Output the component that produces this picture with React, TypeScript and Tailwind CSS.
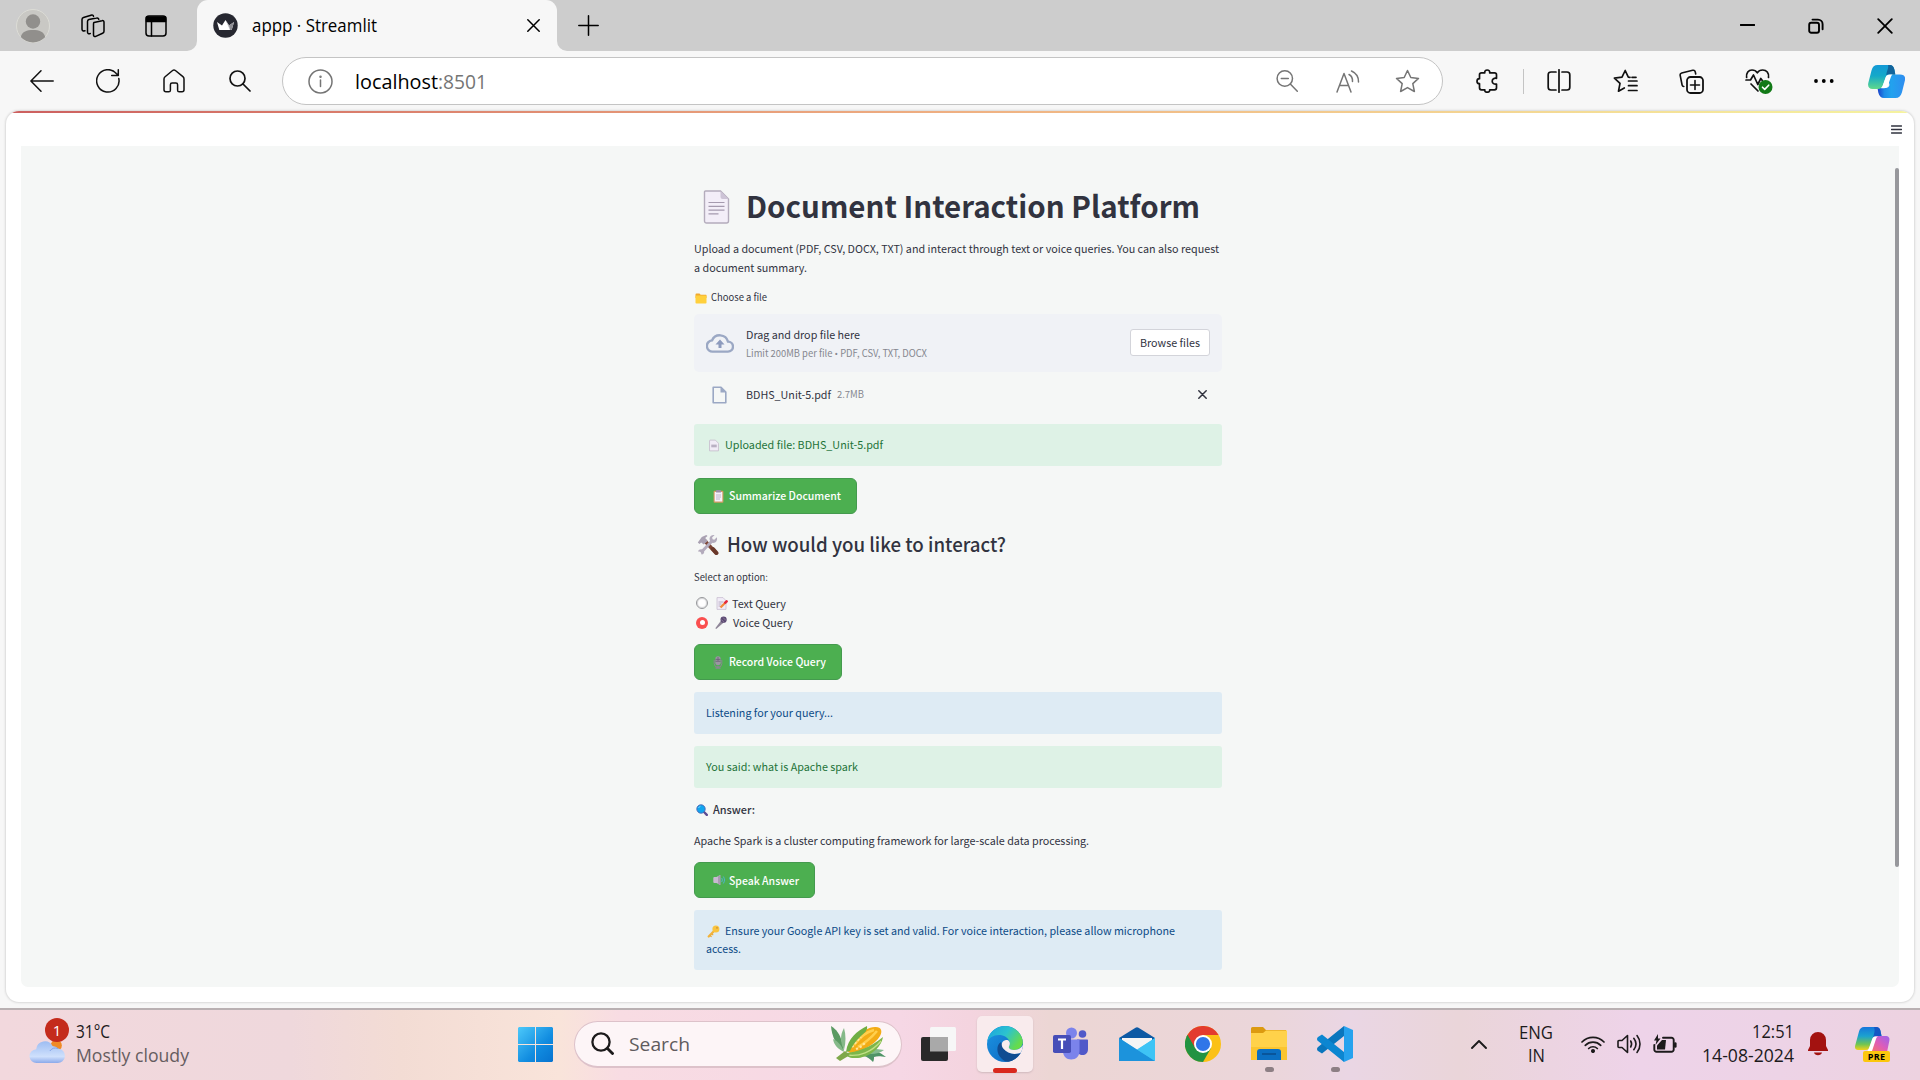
import React, { useLayoutEffect, useRef, useState } from "react";

type FitProps = { className: string; lift?: number; children: React.ReactNode };

/** Single line of text condensed or widened to fill the width of its box. */
function Fit({ className, lift = 0, children }: FitProps) {
  const box = useRef<HTMLSpanElement>(null);
  const inner = useRef<HTMLSpanElement>(null);
  const [scale, setScale] = useState(1);
  useLayoutEffect(() => {
    if (box.current && inner.current) {
      setScale(box.current.offsetWidth / inner.current.getBoundingClientRect().width);
    }
  }, []);
  return (
    <span ref={box} className={"block shrink-0 whitespace-nowrap " + className}>
      <span ref={inner} className="inline-block origin-left" style={{ transform: `translateY(${-lift}px) scaleX(${scale})` }}>
        {children}
      </span>
    </span>
  );
}

type IconProps = { box: string; className: string; children: React.ReactNode };

function Line({ box, className, children }: IconProps) {
  return (
    <svg viewBox={box} className={"shrink-0 " + className} fill="none" stroke="currentColor" strokeWidth="1.5" strokeLinecap="round" strokeLinejoin="round">
      {children}
    </svg>
  );
}

function Art({ box, className, children }: IconProps) {
  return (
    <svg viewBox={box} className={"shrink-0 " + className}>
      {children}
    </svg>
  );
}

const starPath = "M12.5 1.5l3.3 7 7.7.9-5.7 5.2 1.6 7.9-6.9-3.9-6.9 3.9 1.6-7.9L1.500 9.400l7.700-.9z";

/* ---------- emoji drawings ---------- */

function PageEmoji({ className }: { className: string }) {
  return (
    <Art box="0 0 26 34" className={className}>
      <path d="M2 1h15l8 8v22a2 2 0 0 1-2 2H3a2 2 0 0 1-2-2V2a1 1 0 0 1 1-1z" fill="#f3eef8" stroke="#b4acbc" strokeWidth="1.4" />
      <path d="M17 1l8 8h-6a2 2 0 0 1-2-2z" fill="#cdc4d6" />
      <path d="M5 12.500h16M5 16.300h16M5 20.100h16M5 23.800h10" stroke="#a59aae" strokeWidth="1.200" />
    </Art>
  );
}

function SmallPage({ className }: { className: string }) {
  return (
    <Art box="0 0 11 13" className={className}>
      <path d="M1 .6h6l3.400 3.400v8.400H.6V1z" fill="#f1ecf7" stroke="#c5bccd" strokeWidth=".9" />
      <path d="M2.500 5.500h6v3h-6z" fill="#b9b0c3" />
    </Art>
  );
}

function FolderEmoji() {
  return (
    <Art box="0 0 12 11" className="h-[11px] w-[12px]">
      <path d="M.5 1.500A1 1 0 0 1 1.500.5h3l1.200 1.300H11a.6.6 0 0 1 .5.6V5H.5z" fill="#f0a92e" />
      <rect x=".5" y="2.600" width="11" height="8" rx=".8" fill="#ffd03c" />
    </Art>
  );
}

function ClipboardEmoji() {
  return (
    <Art box="0 0 11 13" className="h-[13px] w-[11px]">
      <rect x=".6" y=".8" width="9.800" height="12" rx="1" fill="#d59a63" />
      <rect x="1.700" y="2" width="7.600" height="9.500" fill="#f5f0fa" />
      <rect x="3" y="0" width="5" height="2.600" rx=".7" fill="#9a8fa6" />
      <path d="M3 5h5M3 7h5M3 9h4" stroke="#b7adc2" strokeWidth=".9" />
    </Art>
  );
}

function ToolsEmoji() {
  return (
    <Art box="0 0 22 22" className="h-[22px] w-[22px]">
      <path d="M8 7l11 12" stroke="#7d4533" strokeWidth="3.600" strokeLinecap="round" />
      <path d="M16 15l3.500 4" stroke="#6a382a" strokeWidth="4" strokeLinecap="round" />
      <path d="M.8 8.500l4-5.500 4.500-2 1.200 1-2.300 2 2.500 3-4 3.500-2.500-2L2.500 10z" fill="#a9a1b2" />
      <path d="M4 18.500L15 7" stroke="#b3abbc" strokeWidth="3" />
      <path d="M19.800 3.200l-2.500 2.500-1.700-.4-.5-1.700 2.500-2.500c-2-.6-4.500.5-5 3-.4 2.400 1.200 4.700 3.500 4.800 2.800.1 4.700-2.700 3.700-5.700z" fill="#b3abbc" />
      <path d="M1 17.500l2.700.3.800 2.700c2 0 3-1.600 2.600-3.200C6.600 15.300 3.800 14.500 1.800 16z" fill="#b3abbc" />
    </Art>
  );
}

function MemoEmoji() {
  return (
    <Art box="0 0 12 13" className="h-[13px] w-[12px]">
      <path d="M1 .6h6l3 3v8.800H1z" fill="#f1ecf7" stroke="#c8bfd0" strokeWidth=".8" />
      <path d="M2.500 5h5M2.500 7h3M2.500 9h2" stroke="#b2a8be" strokeWidth=".9" />
      <path d="M4.500 10.500l5-5" stroke="#f38b3c" strokeWidth="2.300" />
      <path d="M9.300 5.700l1.300-1.300" stroke="#e5283c" strokeWidth="2.600" strokeLinecap="round" />
    </Art>
  );
}

function MicEmoji() {
  return (
    <Art box="0 0 12 13" className="h-[13px] w-[12px]">
      <path d="M.3 12.300L6.500 4l2.500 2.300-7.800 6.600z" fill="#8f8698" />
      <circle cx="8.600" cy="3.700" r="3.100" fill="#5c4a74" />
      <path d="M6.300 3.500l3 3M8 1.500l3 3" stroke="#95869f" strokeWidth=".8" />
    </Art>
  );
}

function StudioMicEmoji() {
  return (
    <Art box="0 0 10 13" className="h-[13px] w-[10px]">
      <path d="M1.200 4v3.500a3.800 3.800 0 0 0 7.600 0V4" fill="none" stroke="#8b8592" strokeWidth="1" />
      <rect x="2.300" y=".3" width="5.400" height="9" rx="2.700" fill="#9b94a3" />
      <path d="M2.500 3.400h5M2.500 5.300h5M5 1v4" stroke="#6a5f75" strokeWidth=".8" />
      <path d="M2.500 12h5M5 10v2" stroke="#8b8592" strokeWidth="1.500" />
    </Art>
  );
}

function LensEmoji() {
  return (
    <Art box="0 0 12 12" className="h-[12px] w-[12px]">
      <path d="M8 8l2.800 2.800" stroke="#5d4c92" strokeWidth="2.400" strokeLinecap="round" />
      <circle cx="5" cy="5" r="4.200" fill="#0fa5ef" stroke="#4865b5" strokeWidth=".9" />
      <path d="M2.500 4a3 3 0 0 1 2-1.800" stroke="#7fd5ff" strokeWidth=".9" fill="none" />
    </Art>
  );
}

function SpeakerEmoji() {
  return (
    <Art box="0 0 12 12" className="h-[12px] w-[12px]">
      <path d="M.3 4a1 1 0 0 1 1-1H3.500L7.200 1v10L3.500 9H1.300a1 1 0 0 1-1-1z" fill="#c9b9d2" />
      <path d="M5 2.200v7.600L7.400 11V1z" fill="#a99bb3" />
      <path d="M8.700 4c.8 1.300.8 2.700 0 4M10.300 2.500c1.600 2.400 1.600 4.600 0 7" fill="none" stroke="#4db5cf" strokeWidth="1" />
    </Art>
  );
}

function KeyEmoji() {
  return (
    <Art box="0 0 13 13" className="h-[13px] w-[13px]">
      <path d="M1.700 11.500L7.500 5.500" stroke="#f2b23a" strokeWidth="2.200" strokeLinecap="round" />
      <path d="M3 10.500l1.600 1.400M4.800 8.800l1.400 1.300" stroke="#e9ab3a" strokeWidth="1.200" />
      <circle cx="8.900" cy="4" r="3.500" fill="#f9c440" />
      <circle cx="10" cy="2.900" r=".8" fill="#c98a30" />
    </Art>
  );
}

/* ---------- browser ---------- */

function TabStrip() {
  return (
    <div className="flex h-[51px] items-center bg-[#cdcdcd] text-black">
      <Art box="0 0 34 34" className="ml-[16px] h-[34px] w-[34px]">
        <circle cx="17" cy="17" r="16.500" fill="#c9c8c4" stroke="#dcdcd6" />
        <ellipse cx="17" cy="12.500" rx="7.200" ry="7.200" fill="#918f8c" />
        <path d="M4.800 28c1.500-5.500 6-7 12.200-7s10.700 1.500 12.200 7a16.300 16.300 0 0 1-24.400 0z" fill="#918f8c" />
      </Art>
      <Line box="0 0 24 24" className="ml-[31px] h-[24px] w-[24px]">
        <path d="M13 8.500l8-1.800c1.200-.3 2 .3 2 1.500v9c0 1-.4 1.600-1.400 2l-6.800 3.200c-1 .5-2.300 0-2.300-1.500V10c0-.8 0-1.200.5-1.500z" />
        <path d="M9.300 19.500c-1.800.6-2.800 0-2.800-1.500V7.500c0-1 .5-1.700 1.400-2L15.500 4c1.300-.3 2 .2 2.300 1.200" />
        <path d="M4 16.800c-1.800.4-3 0-3-1.600V5.500c0-1 .5-1.700 1.500-2L10 1.200c1.300-.4 2.200 0 2.500 1" />
      </Line>
      <Line box="0 0 22 22" className="ml-[40px] h-[22px] w-[22px]">
        <rect x="1" y="1" width="20" height="20" rx="3" />
        <path d="M1.500 2h19v4.500h-19z" fill="currentColor" />
        <path d="M6.500 6v15" />
      </Line>
      <div className="relative ml-[30px] flex h-full w-[360px] items-center rounded-t-[11px] bg-[#f7f7f7] pr-[17px] pl-[16px]">
        <svg viewBox="0 0 10 10" className="absolute bottom-0 -left-[10px] h-[10px] w-[10px]"><path d="M10 0v10H0A10 10 0 0 0 10 0z" fill="#f7f7f7" /></svg>
        <svg viewBox="0 0 10 10" className="absolute -right-[10px] bottom-0 h-[10px] w-[10px]"><path d="M0 0v10h10A10 10 0 0 1 0 0z" fill="#f7f7f7" /></svg>
        <Art box="0 0 25 25" className="h-[25px] w-[25px]">
          <circle cx="12.500" cy="12.500" r="12.200" fill="#262730" />
          <path d="M4 9l5 3.500L12.500 7l3.500 5.500L21 9l-2.300 8H6.300z" fill="#fff" />
          <path d="M12.500 7l3.500 5.500 1 4.500z" fill="#b9b9bd" />
          <path d="M16 12.500L21 9l-2.300 8H17z" fill="#8d8d93" />
        </Art>
        <Fit lift={1} className="ml-[14px] w-[125px] text-[17.500px] leading-[26px]">appp · Streamlit</Fit>
        <Line box="0 0 13 13" className="ml-auto h-[13px] w-[13px]">
          <path d="M.8.8l11.400 11.400M12.200.8L.8 12.200" />
        </Line>
      </div>
      <Line box="0 0 21 21" className="ml-[21px] h-[21px] w-[21px]">
        <path d="M10.500.8v19.400M.8 10.500h19.400" />
      </Line>
      <Line box="0 0 15 15" className="ml-auto h-[15px] w-[15px]">
        <path d="M.5 7h14" strokeWidth="1.900" />
      </Line>
      <Line box="0 0 16 16" className="ml-[53px] h-[16px] w-[16px]">
        <rect x="1.200" y="4.700" width="9.800" height="10" rx="2" strokeWidth="1.900" />
        <path d="M4.500 1.600h5.500a4.600 4.600 0 0 1 4.600 4.600v5" strokeWidth="1.900" />
      </Line>
      <Line box="0 0 16 16" className="mr-[27px] ml-[53px] h-[16px] w-[16px]">
        <path d="M1.200 1.200l13.600 13.600M14.800 1.200L1.200 14.800" strokeWidth="1.800" />
      </Line>
    </div>
  );
}

function CopilotMark() {
  return (
    <Art box="0 0 37 33" className="ml-[33px] h-[33px] w-[37px]">
      <defs>
        <linearGradient id="cpA" x1="0" y1="0" x2="0" y2="1"><stop offset="0" stopColor="#1499d6" /><stop offset=".45" stopColor="#14a9c9" /><stop offset="1" stopColor="#5fd98b" /></linearGradient>
        <linearGradient id="cpB" x1="1" y1="0" x2="0" y2="0"><stop offset="0" stopColor="#2f8df0" /><stop offset=".5" stopColor="#22a2ee" /><stop offset=".75" stopColor="#1d8ce8" /><stop offset="1" stopColor="#1b3fc9" /></linearGradient>
      </defs>
      <path d="M19 9.500h13c4.500 0 5.700 2.500 4.900 6l-3 12C32.900 31 31 33 27.500 33H16c-3 0-5-2-5.700-5.500L9.500 23h8c2 0 3.500-1.200 4-3z" fill="url(#cpB)" />
      <path d="M9.500 0h11.700c3 0 4.600 1.500 5.300 5l.8 4.500H22c-2.500 0-3.800 1-4.500 3.200l-2.700 7.800C13.900 23 12.200 24 9.700 24H4.500C1 24-.5 21.500.3 18L3.500 5.500C4.500 1.800 6.500 0 9.500 0z" fill="url(#cpA)" />
      <path d="M20 0h1.700c3 0 4 1.500 4.800 5l.8 4.500H22c-2 0-2.800-.5-3.800 1C18.500 6 21 3 20 0z" fill="#13659c" />
      <path d="M22 9.600c-2.500 0-3.700 1-4.400 3.100l-2.800 7.800c-.5 1.300-1 2-1.800 2.700h3c2 0 3.500-1.200 4-3l3-8.500c.3-.9.700-1.500 1.500-2.100z" fill="#fff" />
    </Art>
  );
}

function Toolbar() {
  return (
    <div className="flex h-[60px] items-center bg-[#f7f7f7] text-[#111]">
      <Line box="0 0 24 22" className="ml-[30px] h-[22px] w-[24px]"><path d="M23.200 11H1M11 .8L.9 11 11 21.200" /></Line>
      <Line box="0 0 24 24" className="ml-[42px] h-[24px] w-[24px]"><path d="M22.800 9.500A11.200 11.200 0 1 1 20.300 4.500l2 1.900M22.300.8v5.800h-6.600" /></Line>
      <Line box="0 0 22 24" className="ml-[43px] h-[24px] w-[22px]"><path d="M1 10c0-1 .4-1.700 1.100-2.300l7.500-6.200c.9-.7 1.900-.7 2.800 0l7.500 6.200c.7.6 1.100 1.300 1.100 2.300v10.800c0 1.200-.8 2-2 2h-2.800c-1 0-1.600-.7-1.600-1.600v-5.400c0-1-.7-1.700-1.700-1.700H9.100c-1 0-1.700.7-1.700 1.700v5.400c0 .9-.6 1.600-1.600 1.600H3c-1.200 0-2-.8-2-2z" /></Line>
      <Line box="0 0 22 22" className="ml-[44px] h-[22px] w-[22px]"><circle cx="8.500" cy="8.500" r="7.500" strokeWidth="1.700" /><path d="M14 14l7 7" strokeWidth="1.700" /></Line>
      <div className="ml-[31px] flex h-[48px] w-[1161px] items-center rounded-full border border-[#c4c4c4] bg-white pr-[22px] pl-[25px] text-[#757575]">
        <Line box="0 0 25 25" className="h-[25px] w-[25px]"><circle cx="12.500" cy="12.500" r="11.500" /><path d="M12.500 11v6.500" /><circle cx="12.500" cy="7.700" r=".5" fill="currentColor" /></Line>
        <Fit className="ml-[22px] w-[83px] text-[20.500px] leading-[28px] text-black">localhost</Fit>
        <Fit className="w-[49px] text-[20.500px] leading-[28px]">:8501</Fit>
        <Line box="0 0 22 22" className="ml-auto h-[22px] w-[22px]"><circle cx="8.800" cy="8.500" r="7.700" /><path d="M14.300 14l7 7.200M5.300 8.500h7" /></Line>
        <Line box="0 0 24 23" className="ml-[38px] h-[23px] w-[24px]"><path d="M1 22L8 3.500 15 22M3.500 15.500h9M13 4.500c2.500 1.300 3.700 3.800 3.500 7M15.500 1c4.800 2.200 7.200 6 7 11" /></Line>
        <Line box="0 0 25 24" className="ml-[35px] h-[24px] w-[25px]"><path d={starPath} /></Line>
      </div>
      <Line box="0 0 22 24" className="ml-[33px] h-[24px] w-[22px]"><path strokeWidth="1.700" d="M5.500 3.800h3.300C8.500 2 9.500 1 11.200 1s2.800 1 2.500 2.800h4.800c1.300 0 2 .7 2 2v3.500c-2.300-.4-4.300.7-4.300 2.900s2 3.300 4.300 2.900v3.700c0 1.300-.7 2-2 2h-4.800c.3 1.500-.8 2.400-2.500 2.400s-2.700-.9-2.400-2.400H5.500c-1.300 0-2-.7-2-2v-4.100C2 14.700 1 13.700 1 12.200S2 9.700 3.500 9.700V5.800c0-1.300.7-2 2-2z" /></Line>
      <div className="ml-[25px] h-[25px] w-px bg-[#c4c4c4]" />
      <Line box="0 0 24 24" className="ml-[23px] h-[24px] w-[24px]"><path strokeWidth="1.700" d="M12 .8v22.400M9 3H4C2.300 3 1.200 4 1.200 5.700v12.600C1.200 20 2.300 21 4 21h5M15 3h5c1.700 0 2.800 1 2.800 2.700v12.600c0 1.700-1.100 2.700-2.800 2.700h-5" /></Line>
      <Line box="0 0 25 24" className="ml-[42px] h-[24px] w-[25px]"><path strokeWidth="1.700" d="M17 8.300l-1.700-.2L12.200 1.500 9 8.200l-7.600 1 5.600 5.200-1.500 7.800 5.800-3.300M15.500 12h8.500M15.500 16.700h8.500M15.500 21.500H24M19 8.300h4" /></Line>
      <Line box="0 0 25 25" className="ml-[41px] h-[25px] w-[25px]"><rect x="8" y="8" width="16" height="16" rx="3.500" strokeWidth="1.800" /><path strokeWidth="1.600" d="M16 11.500v9M11.500 16h9M4.800 17.500c-1 0-1.500-.5-1.700-1.500L1.200 6.500c-.3-1.300.3-2.200 1.500-2.500l11-2.700c1.300-.3 2.200.2 2.500 1.400l.5 2.300" /></Line>
      <Line box="0 0 28 26" className="ml-[41px] h-[26px] w-[28px]">
        <path strokeWidth="1.700" d="M1.600 9.500C1 5 3.500 2 7 2c2.200 0 4 .8 5.300 2.800 1.300-2 3.200-2.800 5.400-2.800 3.800 0 6.500 3 5.800 7.500M1 12h4.500l3-5 4.300 9.500 3-6 1.500 2M6 16l7 7" />
        <circle cx="20.500" cy="19" r="7" fill="#127a17" stroke="none" />
        <path d="M17.500 19.200l2.200 2.200 4-4.200" stroke="#fff" strokeWidth="1.600" />
      </Line>
      <Art box="0 0 22 6" className="ml-[40px] h-[6px] w-[22px]"><circle cx="3" cy="3" r="1.900" /><circle cx="10.800" cy="3" r="1.900" /><circle cx="18.700" cy="3" r="1.900" /></Art>
      <CopilotMark />
    </div>
  );
}

/* ---------- page content ---------- */

function GreenButton({ className, children }: { className: string; children: React.ReactNode }) {
  return (
    <div className={"flex h-[36px] shrink-0 items-center rounded-[6px] border border-[#449a4e] bg-[#4caf50] pl-[18px] font-medium text-white " + className}>
      {children}
    </div>
  );
}

function PageContent() {
  return (
    <div className="flex w-[528px] flex-col font-['Noto_Sans_CJK_SC','Noto_Sans',sans-serif] text-[11px] leading-[19px] text-[#31333f]">
      <div className="mt-[36px] flex h-[50px] items-center">
        <PageEmoji className="ml-[9px] h-[34px] w-[27px]" />
        <Fit lift={2} className="ml-[16px] w-[454px] text-[30px] leading-[50px] font-bold">Document Interaction Platform</Fit>
      </div>
      <div className="mt-[7px]">
        <Fit className="h-[19px] w-[525px]">Upload a document (PDF, CSV, DOCX, TXT) and interact through text or voice queries. You can also request</Fit>
        <Fit className="h-[19px] w-[113px]">a document summary.</Fit>
      </div>
      <div className="mt-[13px] flex h-[16px] items-center pl-px">
        <FolderEmoji />
        <Fit lift={1} className="ml-[4px] w-[56px] text-[9.700px] leading-[16px]">Choose a file</Fit>
      </div>
      <div className="mt-[8px] flex h-[58px] items-center rounded-[5px] bg-[#f0f2f6] pr-[12px] pb-px pl-[12px]">
        <Art box="0 0 28 20" className="h-[20px] w-[28px]">
          <path d="M7 18.600a5.600 5.600 0 0 1-1-11.200 8.500 8.500 0 0 1 16 1.200 5 5 0 0 1 0 10z" fill="none" stroke="#9ba8c4" strokeWidth="2.400" />
          <path d="M14 6.500l4.500 5h-3V15h-3v-3.500h-3z" fill="#8d9bbd" />
        </Art>
        <div className="mt-[3px] ml-[12px]">
          <Fit lift={1} className="h-[18px] w-[114px] leading-[18px]">Drag and drop file here</Fit>
          <Fit className="h-[19px] w-[181px] text-[9.700px] leading-[19px] text-[#85878f]">
            Limit 200MB per file <span className="font-['Open_Sans']">•</span> PDF, CSV, TXT, DOCX
          </Fit>
        </div>
        <div className="ml-auto flex h-[27px] w-[80px] items-center justify-center rounded-[3px] border border-[#d3d4da] bg-white">
          <Fit className="w-[60px]">Browse files</Fit>
        </div>
      </div>
      <div className="flex h-[45px] items-center pr-[15px] pl-[18px]">
        <Art box="0 0 15 18" className="h-[18px] w-[15px]">
          <path d="M1.200 1.200H9L13.800 6v10.800H1.200z" fill="none" stroke="#9ba8c4" strokeWidth="1.600" strokeLinejoin="round" />
          <path d="M8.500 1v5.500H14z" fill="#9ba8c4" />
        </Art>
        <Fit className="ml-[19px] w-[85px]">BDHS_Unit-5.pdf</Fit>
        <Fit className="ml-[6px] w-[27px] text-[9.700px] text-[#85878f]">2.7MB</Fit>
        <Line box="0 0 9 9" className="ml-auto h-[9px] w-[9px]"><path d="M.8.8l7.400 7.400M8.200.8L.8 8.200" /></Line>
      </div>
      <div className="mt-[7px] flex h-[42px] items-center rounded-[3px] bg-[#def2e6] pl-[15px] text-[#1d7338]">
        <SmallPage className="h-[13px] w-[10px]" />
        <Fit lift={1} className="ml-[6px] w-[158px]">Uploaded file: BDHS_Unit-5.pdf</Fit>
      </div>
      <GreenButton className="mt-[12px] w-[163px]">
        <ClipboardEmoji />
        <Fit lift={1} className="ml-[5px] w-[112px]">Summarize Document</Fit>
      </GreenButton>
      <div className="mt-[16px] flex h-[30px] items-center pl-[3px]">
        <ToolsEmoji />
        <Fit lift={1} className="ml-[8px] w-[279px] text-[19.500px] leading-[30px] font-medium">How would you like to interact?</Fit>
      </div>
      <Fit className="mt-[9px] h-[16px] w-[74px] text-[9.700px] leading-[16px]">Select an option:</Fit>
      <div className="mt-[8px] flex h-[20px] items-center">
        <div className="ml-[2px] h-[12px] w-[12px] rounded-full border border-[#96979a] bg-white shadow-[inset_0_0_1px_1px_#d4d5d7]" />
        <div className="ml-[8px]"><MemoEmoji /></div>
        <Fit className="ml-[4px] w-[54px] leading-[20px]">Text Query</Fit>
      </div>
      <div className="flex h-[20px] items-center pb-px">
        <div className="ml-[2px] h-[12px] w-[12px] rounded-full bg-[#fa4f4f] p-[3.500px]"><div className="h-full w-full rounded-full bg-white" /></div>
        <div className="ml-[7px]"><MicEmoji /></div>
        <Fit lift={1} className="ml-[6px] w-[60px] leading-[20px]">Voice Query</Fit>
      </div>
      <GreenButton className="mt-[11px] w-[148px]">
        <StudioMicEmoji />
        <Fit lift={1} className="ml-[6px] w-[97px]">Record Voice Query</Fit>
      </GreenButton>
      <div className="mt-[12px] flex h-[42px] items-center rounded-[3px] bg-[#deebf4] pl-[12px] text-[#0b4a86]">
        <Fit lift={1} className="w-[127px]">Listening for your query...</Fit>
      </div>
      <div className="mt-[12px] flex h-[42px] items-center rounded-[3px] bg-[#def2e6] pl-[12px] text-[#1d7338]">
        <Fit lift={1} className="w-[152px]">You said: what is Apache spark</Fit>
      </div>
      <div className="mt-[12px] flex h-[20px] items-center pl-[2px]">
        <LensEmoji />
        <Fit lift={1} className="ml-[5px] w-[42px] leading-[20px] font-medium">Answer:</Fit>
      </div>
      <Fit lift={1} className="mt-[11px] h-[20px] w-[395px] leading-[20px]">Apache Spark is a cluster computing framework for large-scale data processing.</Fit>
      <GreenButton className="mt-[11px] w-[121px]">
        <SpeakerEmoji />
        <Fit className="ml-[4px] w-[70px]">Speak Answer</Fit>
      </GreenButton>
      <div className="mt-[12px] flex h-[60px] flex-col justify-center rounded-[3px] bg-[#deebf4] pl-[12px] text-[#0b4a86]">
        <div className="flex h-[18px] items-center pl-px">
          <KeyEmoji />
          <Fit lift={1} className="ml-[5px] w-[450px] leading-[18px]">Ensure your Google API key is set and valid. For voice interaction, please allow microphone</Fit>
        </div>
        <Fit lift={1} className="h-[18px] w-[35px] leading-[18px]">access.</Fit>
      </div>
    </div>
  );
}

function Viewport() {
  return (
    <div className="flex h-[897px] justify-center bg-[#f7f7f7] px-[6px] pb-[6px]">
      <div className="flex h-[891px] w-full flex-col overflow-hidden rounded-[13px] bg-white shadow-[0_0_2px_1px_#dadada]">
        <div className="h-[2px] shrink-0 bg-linear-to-r from-[#cc5f5f] via-[#efb082] to-[#f5f3a0]" />
        <div className="flex h-[33px] shrink-0 justify-end pt-[12px] pr-[12px] text-[#31333f]">
          <Line box="0 0 11 9" className="h-[9px] w-[11px]"><path d="M.5 1h10M.5 4.500h10M.5 8h10" /></Line>
        </div>
        <div className="mr-[15px] ml-[15px] flex h-[841px] justify-between rounded-b-[7px] bg-[#f5f7f6] pl-[673px]">
          <PageContent />
          <div className="mt-[22px] h-[699px] w-[4px] rounded-full bg-[#97989c]" />
        </div>
      </div>
    </div>
  );
}

/* ---------- taskbar ---------- */

function Weather() {
  return (
    <div className="flex w-[518px] items-center">
      <div className="relative ml-[28px] h-[46px] w-[44px]">
        <Art box="0 0 38 28" className="absolute top-[17px] left-0 h-[26px] w-[38px]">
          <defs>
            <linearGradient id="cl" x1="0" y1="0" x2="0" y2="1"><stop offset="0" stopColor="#9dbdf2" /><stop offset=".7" stopColor="#cfe0fc" /><stop offset="1" stopColor="#8aa9ea" /></linearGradient>
          </defs>
          <circle cx="29" cy="8" r="6" fill="#ef8a25" />
          <path d="M8 27a7.500 7.500 0 0 1-.7-15A9.500 9.500 0 0 1 25 8.500a8 8 0 0 1 6 2.800A7.500 7.500 0 0 1 30 27z" fill="url(#cl)" />
          <path d="M22 14a8 8 0 0 1 9-2.700" fill="none" stroke="#7f9fe4" strokeWidth="1" />
        </Art>
        <div className="absolute -top-[3px] left-[17px] flex h-[24px] w-[24px] items-center justify-center rounded-full bg-[#c42b1c] text-[15px] text-white">1</div>
      </div>
      <div className="ml-[4px] text-[17.500px] leading-[24px]">
        <Fit lift={1} className="w-[34px] text-[#1c1a1b]">31°C</Fit>
        <Fit lift={1} className="w-[113px] text-[#665d60]">Mostly cloudy</Fit>
      </div>
    </div>
  );
}

function Corn() {
  return (
    <Art box="0 0 56 37" className="ml-auto h-[37px] w-[56px]">
      <path d="M0 1c5 3 9 8 11 16l2 9C5 20 1 12 0 1z" fill="#5b9a62" />
      <path d="M13 3c2 7 2 14 0 22C9 17 9 10 13 3zM2 14c5 2 9 7 11 13C7 24 3 20 2 14z" fill="#86b989" />
      <path d="M20 28c11-6 24-5 35 4-6-1-9-1-12 0 0 2 0 3-1 5-5-6-13-8-22-9z" fill="#4f9467" />
      <path d="M31 24c8-1 15 0 22 1-5 4-13 5-21 3z" fill="#83ba8e" />
      <path d="M16 26C19 15 31 3 44 2c6-.5 8 4 5 9-5 9-19 16-30 17z" fill="#f3ac16" />
      <path d="M23 20C28 13 35 7 43 5M27 22c7-4 13-9 19-16" stroke="#ffcf4d" strokeWidth="2.600" fill="none" />
      <path d="M21 22c3-4 6-7 9-10M25 24c3-1 6-3 9-6" stroke="#ffe79a" strokeWidth="2.200" strokeDasharray="2.200 2" fill="none" />
      <path d="M15 27C17 13 26 6 36 1c1 5-3 7-7 11-5 5-8 9-10 14z" fill="#6fae45" />
      <path d="M15 28c10-1 24-5 37-16-2 12-16 22-29 21-5 0-8-2-8-5z" fill="#7cb64b" />
      <path d="M16 30c12 2 25-3 34-14" stroke="#c1df87" strokeWidth="1.300" fill="none" />
      <path d="M5 33l9-7 5 4-10 6z" fill="#7fa84a" />
    </Art>
  );
}

function EdgeLogo() {
  return (
    <Art box="0 0 36 36" className="h-[36px] w-[36px]">
      <defs>
        <linearGradient id="eT" x1="0" y1="0" x2="1" y2=".5"><stop offset="0" stopColor="#1aa0e0" /><stop offset=".55" stopColor="#2cc3cf" /><stop offset="1" stopColor="#66dc4b" /></linearGradient>
        <linearGradient id="eB" x1="0" y1="0" x2="1" y2="1"><stop offset="0" stopColor="#1c96e3" /><stop offset="1" stopColor="#0c62be" /></linearGradient>
        <clipPath id="eC"><circle cx="18" cy="18" r="18" /></clipPath>
      </defs>
      <g clipPath="url(#eC)">
        <rect width="36" height="36" fill="url(#eB)" />
        <path d="M14 16c-5 3-5 12 1 17 2 2 4 3 8 3 6 0 11-4 13-10-4 2-11 3-16-1-3-2-5-5-6-9z" fill="#104c91" />
        <path d="M0 16C1 6 9 0 18 0c10 0 18 7 18 15.500 0 5-4 8.500-9 8.500-3.500 0-6-1.500-5-3.500 1-1.700 1.300-3 .5-5C21 11.500 17 9 12 9 6 9 2 12 0 16z" fill="url(#eT)" />
        <path d="M22.300 15.500c1 1.800.6 3.200-.3 5-1 2.200 1.800 3.500 5 3.500 4 0 7-2 9-5v6.500c-.8.500-1.800 1-2.800 1.400-6 2.200-13 .8-17-4.400-2.800-3.700-1.200-7.800 2.100-8.300 2-.3 3 0 4 1.300z" fill="#f7edee" />
        <path d="M33.200 26.900c1.400-.6 1.300-.2.800.8L36 28v-3z" fill="#f9ebed" />
      </g>
    </Art>
  );
}

function PinnedApps() {
  return (
    <>
      <Art box="0 0 35 35" className="h-[35px] w-[35px]">
        <rect x="0" y="10" width="27" height="24" rx="2" fill="#292929" />
        <rect x="9" y="0" width="26" height="24" rx="1.500" fill="#f7f7f7" />
        <path d="M9 10h18v14.500H9z" fill="#a9a9a9" />
      </Art>
      <div className="relative ml-[21px] flex h-[56px] w-[56px] items-center justify-center rounded-[5px] bg-[#f9ebed] shadow-[0_1px_2px_#cfb9bd]">
        <EdgeLogo />
        <div className="absolute bottom-[-1px] left-[16px] h-[5px] w-[24px] rounded-full bg-[#d9281e]" />
      </div>
      <Art box="0 0 35 34" className="ml-[20px] h-[34px] w-[35px]">
        <circle cx="18.500" cy="6" r="5.500" fill="#7b83eb" />
        <circle cx="29.500" cy="7" r="3.800" fill="#5059c9" />
        <path d="M24 12.500h10c.7 0 1 .4 1 1V22c0 4-2.500 6-5.500 6S24 26 24 22z" fill="#5059c9" />
        <path d="M10 12.500h15.500c.7 0 1 .4 1 1V24c0 5-3.500 8.500-8.300 8.500S10 29 10 24z" fill="#7b83eb" />
        <rect x="0" y="8" width="18" height="18" rx="1.800" fill="#464eb8" />
        <path d="M5 12.500h8M9 12.500V22" stroke="#fff" strokeWidth="2.200" />
      </Art>
      <Art box="0 0 36 34" className="ml-[31px] h-[34px] w-[36px]">
        <path d="M0 11L16.500.7a3 3 0 0 1 3 0L36 11v5H0z" fill="#0c59a4" />
        <path d="M3 11h30v10L18 30 3 21z" fill="#f5f5f5" />
        <path d="M0 11l18 12L36 11v23H0z" fill="#35b8f1" />
        <path d="M0 11l36 23H0z" fill="#1c93dc" />
        <path d="M36 11L18 22.500 36 34z" fill="#3ec4f5" />
      </Art>
      <Art box="0 0 36 36" className="ml-[30px] h-[36px] w-[36px]">
        <circle cx="18" cy="18" r="18" fill="#fbc116" />
        <path d="M18 18L2.400 9A18 18 0 0 0 18 36l7.800-13.500z" fill="#229342" />
        <path d="M2.400 9A18 18 0 0 1 33.600 9H18L10.200 22.500z" fill="#e33b2e" />
        <path d="M10.200 22.500L2.400 9l-.8 1.500L8 24z" fill="#229342" />
        <circle cx="18" cy="18" r="9" fill="#fff" />
        <circle cx="18" cy="18" r="7.100" fill="#2f76e8" />
      </Art>
      <div className="relative ml-[30px] h-[34px] w-[36px]">
        <Art box="0 0 36 33" className="h-[33px] w-[36px]">
          <path d="M0 1.500A1.500 1.500 0 0 1 1.500 0H12l3 3h20v6H0z" fill="#dc9a10" />
          <path d="M0 6h12l3-2.500h21V33H0z" fill="#ffd24a" />
          <path d="M0 20h36v13H0z" fill="#fbc52f" />
          <path d="M6 33v-8a3 3 0 0 1 3-3h18a3 3 0 0 1 3 3v8z" fill="#0b6fc2" />
          <path d="M11 27h14" stroke="#0a4d8d" strokeWidth="1.500" />
        </Art>
        <div className="absolute -bottom-[11px] left-[14px] h-[5px] w-[9px] rounded-full bg-[#8d7f84]" />
      </div>
      <div className="relative ml-[30px] h-[36px] w-[36px]">
        <Art box="0 0 36 36" className="h-[36px] w-[36px]">
          <path d="M27 0v10L5 27.500 1 25a2.500 2.500 0 0 1 0-4z" fill="#0a76bd" />
          <path d="M27 36V26L5 8.500 1 11a2.500 2.500 0 0 0 0 4z" fill="#0c86d1" />
          <path d="M27 0l9 4v28l-9 4z" fill="#27a2ee" />
        </Art>
        <div className="absolute -bottom-[10px] left-[14px] h-[5px] w-[9px] rounded-full bg-[#8d7f84]" />
      </div>
    </>
  );
}

function Tray() {
  return (
    <>
      <Line box="0 0 16 9" className="ml-[118px] h-[9px] w-[16px]"><path d="M1 8l7-7 7 7" strokeWidth="1.900" /></Line>
      <div className="ml-[32px] flex w-[34px] flex-col items-center text-[17.500px] leading-[23px]">
        <Fit className="w-[34px]">ENG</Fit>
        <Fit className="w-[17px]">IN</Fit>
      </div>
      <Line box="0 0 24 18" className="ml-[28px] h-[18px] w-[24px]">
        <path d="M1 7a15.500 15.500 0 0 1 22 0M4.300 10.300a10.800 10.800 0 0 1 15.400 0M7.700 13.500a6.200 6.200 0 0 1 8.600 0" strokeWidth="1.700" />
        <circle cx="12" cy="16" r="1.300" fill="currentColor" />
      </Line>
      <Line box="0 0 24 20" className="ml-[12px] h-[20px] w-[24px]">
        <path d="M1 7.500a1 1 0 0 1 1-1h3L10.500 1.500v17L5 13.500H2a1 1 0 0 1-1-1zM13.700 7c1.200 2 1.200 4 0 6M16.800 4.300c2.700 3.500 2.700 7.900 0 11.400M20 1.500c4 5 4 12 0 17" strokeWidth="1.600" />
      </Line>
      <Line box="0 0 24 20" className="ml-[12px] h-[20px] w-[24px]">
        <path d="M10 3.800h8.500a2.200 2.200 0 0 1 2.200 2.200v9.500a2.200 2.200 0 0 1-2.200 2.200h-15a2.200 2.200 0 0 1-2.200-2.200V11" strokeWidth="1.900" />
        <path d="M22.300 9.500v3" strokeWidth="2.600" />
        <path d="M4 15.500V11.500l5-5.500h4l-1 9.500z" fill="currentColor" stroke="none" />
        <path d="M5 0L1 6.500h2.500L2.500 11 7.500 4.500H5z" fill="currentColor" stroke="none" />
      </Line>
      <div className="ml-[26px] flex w-[91px] flex-col items-end text-[17.500px] leading-[24px]">
        <Fit lift={1} className="w-[42px]">12:51</Fit>
        <Fit lift={1} className="w-[92px]">14-08-2024</Fit>
      </div>
      <Art box="0 0 20 24" className="ml-[14px] h-[24px] w-[20px]">
        <path d="M10 0a8 8 0 0 1 8 8v6l2 4v1H0v-1l2-4V8a8 8 0 0 1 8-8zM6 20.500h8c-.5 1.700-2 2.700-4 2.700s-3.500-1-4-2.700z" fill="#a31210" />
      </Art>
      <div className="relative ml-[27px] h-[35px] w-[35px]">
        <Art box="0 0 35 25" className="h-[25px] w-[35px]">
          <defs>
            <linearGradient id="pA" x1="0" y1="0" x2="0" y2="1"><stop offset="0" stopColor="#1776dc" /><stop offset=".4" stopColor="#1ba2cf" /><stop offset=".75" stopColor="#70c552" /><stop offset="1" stopColor="#f2d21a" /></linearGradient>
            <linearGradient id="pB" x1="1" y1="0" x2="0" y2="1"><stop offset="0" stopColor="#9a62ee" /><stop offset=".5" stopColor="#de5cb8" /><stop offset="1" stopColor="#fa7a5e" /></linearGradient>
          </defs>
          <path d="M18 9h12c4 0 5 2 4.300 5L32 25H14z" fill="url(#pB)" />
          <path d="M9 0h12c2.500 0 4 1.500 4.500 4l1 5h-5c-2 0-3.500 1-4 3l-2.700 8c-.6 2-1.800 3-3.800 3H3c-2.500 0-3.500-1.700-2.800-4.500L4 4.500C4.800 1.500 6.500 0 9 0z" fill="url(#pA)" />
          <path d="M19 0h2c2.500 0 4 1.500 4.500 4l1 5h-5c-1.500 0-2.500.6-3.300 1.500C18.800 7 20.500 4 19 0z" fill="#1557c4" />
          <path d="M20 9.500c-1.700.3-2.400 1.200-2.900 2.700L14 21l-1.500 3H17l4-12c.4-1.300.9-2 2-2.500z" fill="#fff" />
        </Art>
        <div className="absolute right-0 bottom-0 flex h-[11px] w-[27px] items-center justify-center rounded-[2px] bg-[#fbc70d] text-[9px] leading-none font-bold tracking-wide text-black">PRE</div>
      </div>
    </>
  );
}

function Taskbar() {
  return (
    <div className="flex h-[72px] items-center border-t-2 border-[#b9b0b2] bg-[linear-gradient(90deg,#f2d8dd_0px,#efd8dc_290px,#f3dcd4_400px,#f9e4da_560px,#f8dce3_620px,#f6d7e5_900px,#f4d4df_970px,#ecd6d4_1050px,#ebd6da_1270px,#ead6e4_1350px,#ead5d9_1460px,#eed3e9_1640px,#edd3e6_1780px,#edd2e0_1920px)] pb-[2px] text-[#1c1a1b]">
      <Weather />
      <Art box="0 0 35 35" className="h-[35px] w-[35px]">
        <defs><linearGradient id="wn" x1="0" y1="0" x2="1" y2="1"><stop offset="0" stopColor="#4cc9fa" /><stop offset=".6" stopColor="#118ce0" /><stop offset="1" stopColor="#0773cf" /></linearGradient></defs>
        <path d="M1 0h16v17H0V1zM18 0h16l1 1v16H18zM0 18h17v17H1l-1-1zM18 18h17v16l-1 1H18z" fill="url(#wn)" />
      </Art>
      <div className="mr-[19px] ml-[21px] flex h-[47px] w-[328px] items-center rounded-full border border-b-2 border-[#ddc2ca] bg-[#fdf5f7] pr-[14px] pl-[16px]">
        <Line box="0 0 23 23" className="h-[23px] w-[23px]"><circle cx="10" cy="10" r="8.600" strokeWidth="2.300" /><path d="M16.500 16.500l5 5" strokeWidth="2.900" /></Line>
        <Fit className="ml-[15px] w-[61px] text-[19px] leading-[28px] text-[#605b5d]">Search</Fit>
        <Corn />
      </div>
      <PinnedApps />
      <Tray />
    </div>
  );
}

export default function App() {
  return (
    <div className="flex h-[1080px] w-[1920px] flex-col overflow-hidden bg-[#f7f7f7] font-['Open_Sans','Noto_Sans',sans-serif]">
      <TabStrip />
      <Toolbar />
      <Viewport />
      <Taskbar />
    </div>
  );
}
